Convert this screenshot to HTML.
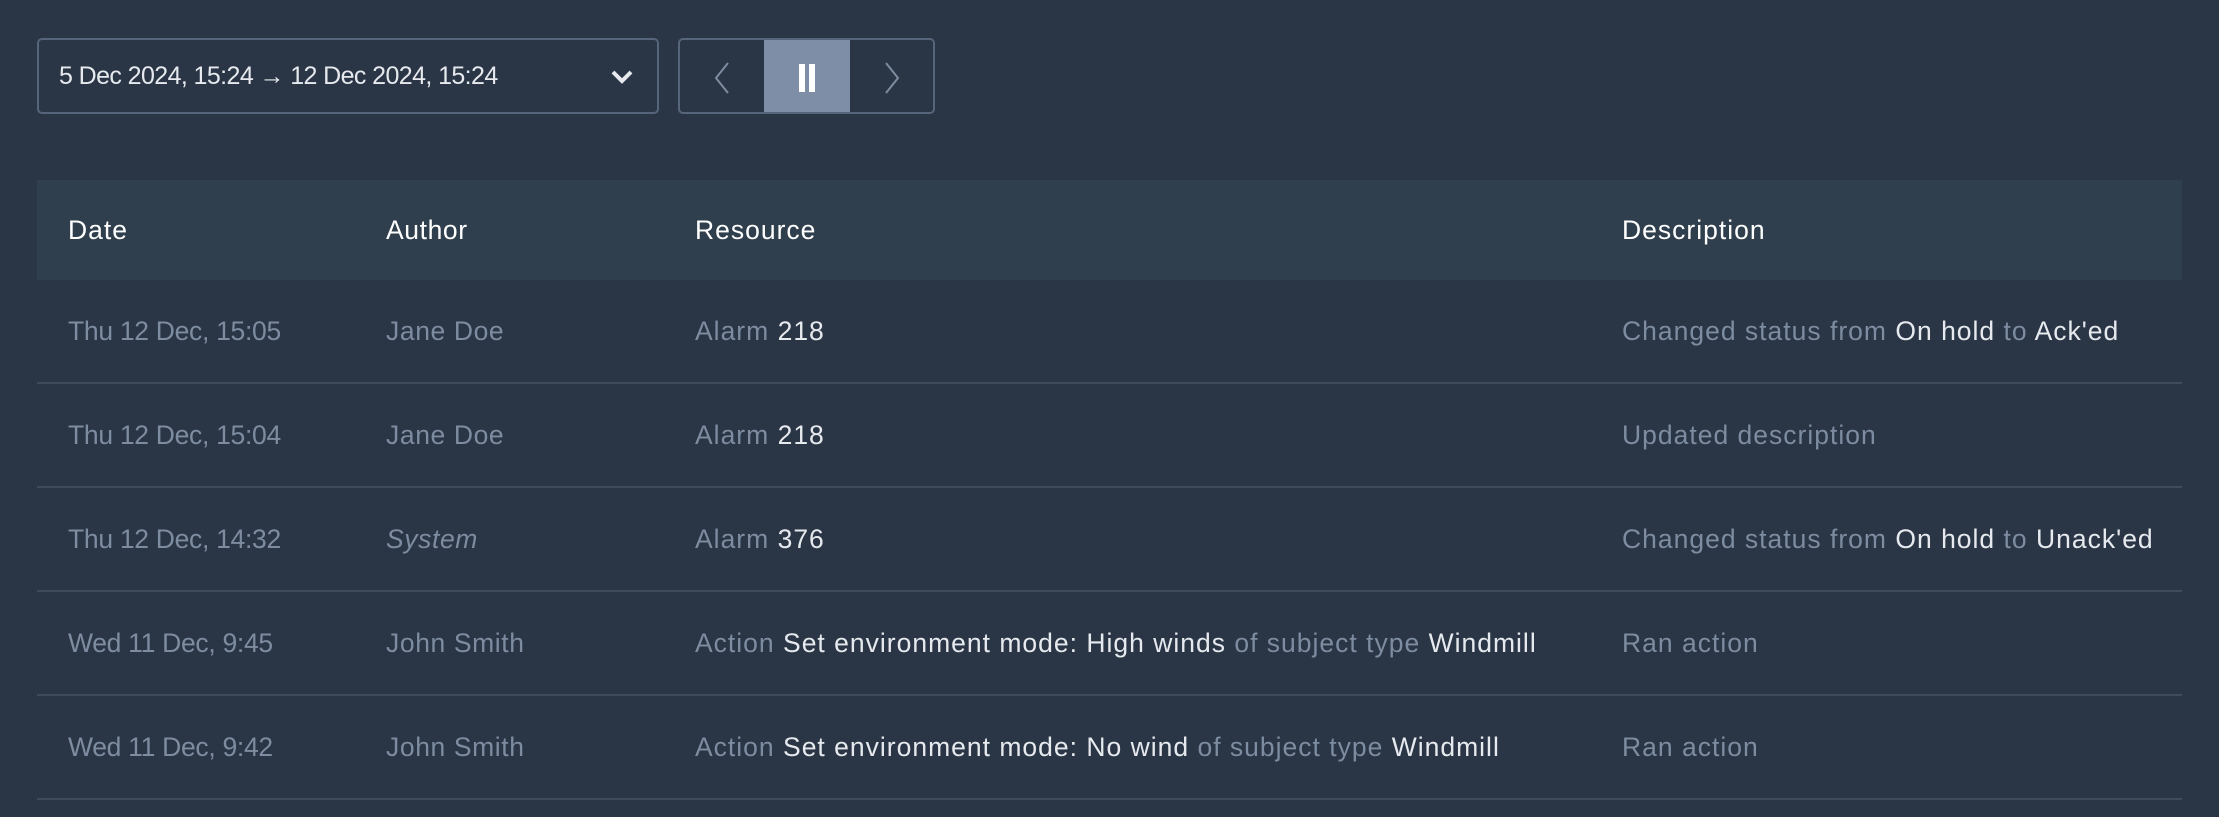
<!DOCTYPE html>
<html><head><meta charset="utf-8"><style>
*{margin:0;padding:0;box-sizing:border-box}
body{width:2219px;height:817px;background:#2a3545;font-family:"Liberation Sans",sans-serif;font-size:26.5px;letter-spacing:1px;color:#7d8ca0;position:relative;overflow:hidden}
.abs{position:absolute}
.w{color:#e6eaee}
.picker{left:37px;top:38px;width:622px;height:76px;border:2px solid #56657a;border-radius:5px;color:#e6eaee;padding-left:20px;line-height:72px;font-size:25px;letter-spacing:-0.6px}
.btns{left:678px;top:38px;width:257px;height:76px;border:2px solid #56657a;border-radius:5px;overflow:hidden}
.act{position:absolute;left:84px;top:0;width:86px;height:100%;background:#7d8ea6}
.head{left:37px;top:180px;width:2145px;height:100px;background:#2f3f4d;color:#fff}
.row{left:37px;width:2145px;height:104px;border-bottom:2px solid #3e4b5c}
.c{position:absolute;top:0;line-height:102px;white-space:nowrap}
.c1{left:31px}.c2{left:349px}.c3{left:658px}.c4{left:1585px}
.row .c1{letter-spacing:-0.3px}
.c2{letter-spacing:0.6px}
</style></head><body>
<div class="abs picker">5 Dec 2024, 15:24 → 12 Dec 2024, 15:24
<svg class="abs" style="left:570px;top:28px" width="26" height="18" viewBox="0 0 26 18"><path d="M4 4 L13 13 L22 4" stroke="#e6eaee" stroke-width="4" fill="none"/></svg></div>
<div class="abs btns"><div class="act"></div>
<svg class="abs" style="left:30px;top:20px" width="24" height="36"><path d="M18 3 L6 18 L18 33" stroke="#7d8ca0" stroke-width="2" fill="none"/></svg>
<svg class="abs" style="left:114px;top:22px" width="26" height="32"><rect x="5" y="2" width="6" height="28" fill="#fff"/><rect x="15" y="2" width="6" height="28" fill="#fff"/></svg>
<svg class="abs" style="left:200px;top:20px" width="24" height="36"><path d="M6 3 L18 18 L6 33" stroke="#7d8ca0" stroke-width="2" fill="none"/></svg>
</div>
<div class="abs head"><div class="c c1" style="line-height:100px">Date</div><div class="c c2" style="line-height:100px">Author</div><div class="c c3" style="line-height:100px">Resource</div><div class="c c4" style="line-height:100px">Description</div></div>
<div class="abs row" style="top:280px"><div class="c c1">Thu 12 Dec, 15:05</div><div class="c c2">Jane Doe</div><div class="c c3">Alarm <span class="w">218</span></div><div class="c c4">Changed status from <span class="w">On hold</span> to <span class="w">Ack'ed</span></div></div>
<div class="abs row" style="top:384px"><div class="c c1">Thu 12 Dec, 15:04</div><div class="c c2">Jane Doe</div><div class="c c3">Alarm <span class="w">218</span></div><div class="c c4">Updated description</div></div>
<div class="abs row" style="top:488px"><div class="c c1">Thu 12 Dec, 14:32</div><div class="c c2"><i>System</i></div><div class="c c3">Alarm <span class="w">376</span></div><div class="c c4">Changed status from <span class="w">On hold</span> to <span class="w">Unack'ed</span></div></div>
<div class="abs row" style="top:592px"><div class="c c1">Wed 11 Dec, 9:45</div><div class="c c2">John Smith</div><div class="c c3">Action <span class="w">Set environment mode: High winds</span> of subject type <span class="w">Windmill</span></div><div class="c c4">Ran action</div></div>
<div class="abs row" style="top:696px"><div class="c c1">Wed 11 Dec, 9:42</div><div class="c c2">John Smith</div><div class="c c3">Action <span class="w">Set environment mode: No wind</span> of subject type <span class="w">Windmill</span></div><div class="c c4">Ran action</div></div>
</body></html>
